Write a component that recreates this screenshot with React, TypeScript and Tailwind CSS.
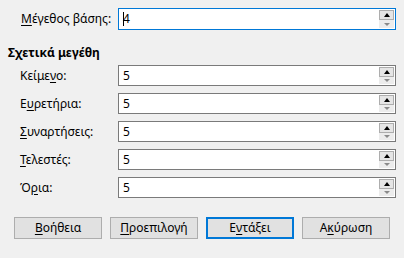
import React from "react";

const font = { fontFamily: '"Noto Sans", "Open Sans", sans-serif' };

function Mn({ t, i }: { t: string; i: number }) {
  return (
    <>
      {t.slice(0, i)}
      <span className="underline underline-offset-2">{t[i]}</span>
      {t.slice(i + 1)}
    </>
  );
}

function Spin() {
  return (
    <div className="flex flex-col w-[15px] h-full py-[1px] mr-[1px]">
      <div className="flex-1 flex items-center justify-center border border-[#adadad] bg-[#e5e5e5]">
        <div className="w-0 h-0 border-l-[3px] border-r-[3px] border-b-[4px] border-l-transparent border-r-transparent border-b-black" />
      </div>
      <div className="flex-1 flex items-center justify-center bg-[#ececec]">
        <div className="w-0 h-0 border-l-[3px] border-r-[3px] border-t-[3px] border-l-transparent border-r-transparent border-t-[#8a8a8a]" />
      </div>
    </div>
  );
}

function SpinField({ value, focused, h }: { value: string; focused?: boolean; h: string }) {
  return (
    <div
      className={`flex items-stretch w-[278px] ${h} bg-white border ${
        focused ? "border-[#0078d7]" : "border-[#7a7a7a]"
      }`}
    >
      <div className="flex-1 flex items-center pl-[4px] text-[12px] text-black">
        {focused && <span className="w-[1px] h-[14px] bg-black mr-[-1px]" />}
        {value}
      </div>
      <Spin />
    </div>
  );
}

function Row({ label, idx }: { label: string; idx: number }) {
  return (
    <div className="flex items-center h-[21px]">
      <div className="w-[118px] pl-[20px] text-[12px] text-black">
        <Mn t={label} i={idx} />
      </div>
      <SpinField value="5" h="h-[21px]" />
    </div>
  );
}

function Btn({ label, idx, def }: { label: string; idx: number; def?: boolean }) {
  return (
    <button
      className={`w-[88px] h-[22px] bg-[#e1e1e1] text-[12px] text-black flex items-center justify-center ${
        def ? "border-2 border-[#0078d7]" : "border border-[#adadad]"
      }`}
    >
      <Mn t={label} i={idx} />
    </button>
  );
}

export default function App() {
  return (
    <div className="w-[404px] h-[258px] bg-[#f0f0f0] flex flex-col" style={font}>
      <div className="flex items-center h-[22px] mt-[8px]">
        <div className="w-[118px] pl-[21px] text-[12px] text-black">
          <Mn t="Μέγεθος βάσης:" i={0} />
        </div>
        <SpinField value="4" focused h="h-[22px]" />
      </div>
      <div className="mt-[15px] pl-[8px] text-[12px] font-bold text-black leading-[16px]">Σχετικά μεγέθη</div>
      <div className="flex flex-col gap-[7px] mt-[4px]">
        <Row label="Κείμενο:" idx={5} />
        <Row label="Ευρετήρια:" idx={1} />
        <Row label="Συναρτήσεις:" idx={0} />
        <Row label="Τελεστές:" idx={0} />
        <Row label="Όρια:" idx={1} />
      </div>
      <div className="flex gap-[8px] pl-[14px] mt-[19px]">
        <Btn label="Βοήθεια" idx={0} />
        <Btn label="Προεπιλογή" idx={0} />
        <Btn label="Εντάξει" idx={1} def />
        <Btn label="Ακύρωση" idx={1} />
      </div>
    </div>
  );
}
